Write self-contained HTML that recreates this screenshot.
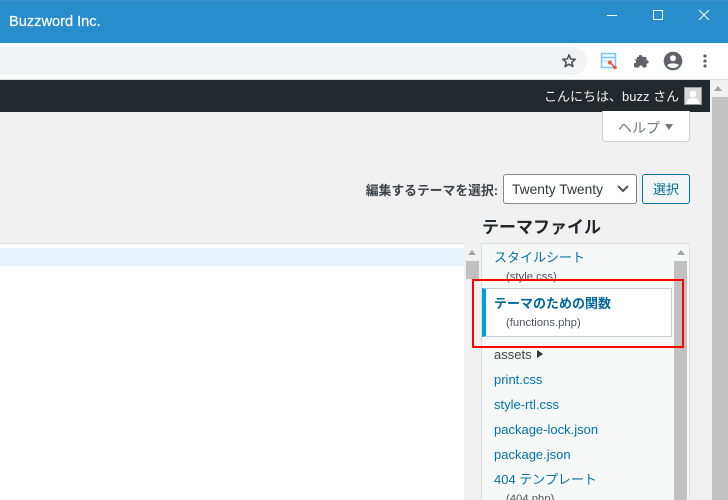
<!DOCTYPE html>
<html lang="ja">
<head>
<meta charset="utf-8">
<style>
html,body{margin:0;padding:0;width:728px;height:500px;overflow:hidden;background:#f1f1f1;}
body{position:relative;font-family:"Liberation Sans","Noto Sans CJK JP",sans-serif;}
.a{position:absolute;}
.t{position:absolute;white-space:nowrap;line-height:18px;}
.l{color:#0073aa;font-size:13px;left:494px;}
.s{color:#50575e;font-size:11.3px;left:506px;}
</style>
</head>
<body>
<!-- title bar -->
<div class="a" style="left:0;top:0;width:728px;height:43px;background:#288dcd;border-top:1px solid #3d93c9;box-sizing:border-box;"></div>
<div class="t" style="left:9px;top:13px;color:#fff;font-size:14.6px;-webkit-text-stroke:.2px #fff;">Buzzword Inc.</div>
<svg class="a" style="left:600px;top:0" width="128" height="30" viewBox="600 0 128 30" fill="none" stroke="#fff" stroke-width="1">
<path d="M607 15.5H617"/>
<rect x="653.5" y="10.5" width="9" height="9"/>
<path d="M699 10L709 20M709 10L699 20"/>
</svg>
<!-- toolbar -->
<div class="a" style="left:0;top:43px;width:728px;height:37px;background:#fff;border-bottom:1px solid #dcdcdc;box-sizing:border-box;"></div>
<div class="a" style="left:-20px;top:47px;width:607px;height:28px;background:#f1f3f4;border-radius:14px;"></div>
<svg class="a" style="left:560px;top:52px" width="18" height="18" viewBox="0 0 18 18" fill="none" stroke="#4d5155" stroke-width="1.6" stroke-linejoin="round">
<path d="M9 2.8L10.7 7L15.2 7.3L11.8 10.2L12.9 14.6L9 12.2L5.1 14.6L6.2 10.2L2.8 7.3L7.3 7Z"/>
</svg>
<svg class="a" style="left:600px;top:52px" width="18" height="18" viewBox="0 0 18 18">
<rect x="1.5" y="1.5" width="14" height="14" fill="#f0f9fe" stroke="#7cc8f5" stroke-width="1.5"/>
<path d="M2 5.5H15" stroke="#7cc8f5" stroke-width="1.5"/>
<path d="M2 9H10" stroke="#a9dcf8" stroke-width="1"/>
<path d="M10 10.5L15 15.5" stroke="#f0593e" stroke-width="1.6"/>
<circle cx="10" cy="10.5" r="2" fill="#f0593e"/>
<circle cx="15" cy="15.5" r="1.8" fill="#f0593e"/>
</svg>
<svg class="a" style="left:632px;top:52px" width="18" height="18" viewBox="0 0 18 18" fill="#5f6368">
<path d="M2 7.5H4.8C4.4 6.6 4.5 5 6 4.9H6.7V4.5C6.7 2.4 10.2 2.4 10.2 4.5V4.9H13.3C14 4.9 14.5 5.4 14.5 6V8.2H15C17.2 8.2 17.2 11.6 15 11.6H14.5V14.3C14.5 15 14 15.5 13.3 15.5H10.6V15C10.6 12.8 7.2 12.8 7.2 15V15.5H3.2C2.5 15.5 2 15 2 14.3V11.2H2.6C4.6 11.2 4.6 8 2.6 8H2Z"/>
</svg>
<svg class="a" style="left:663px;top:51px" width="20" height="20" viewBox="0 0 20 20">
<circle cx="10" cy="10" r="9.3" fill="#5f6368"/>
<circle cx="10" cy="7.3" r="3" fill="#fff"/>
<path d="M4.2 14.2C5.5 11.8 14.5 11.8 15.8 14.2C14.4 16 12.4 17 10 17C7.6 17 5.6 16 4.2 14.2Z" fill="#fff"/>
</svg>
<svg class="a" style="left:700px;top:52px" width="10" height="18" viewBox="0 0 10 18" fill="#5f6368">
<circle cx="5" cy="4" r="1.6"/><circle cx="5" cy="9" r="1.6"/><circle cx="5" cy="14" r="1.6"/>
</svg>
<!-- page scrollbar -->
<div class="a" style="left:712px;top:97px;width:16px;height:403px;background:#c1c1c1;"></div>
<div class="a" style="left:714px;top:86px;width:0;height:0;border-left:4px solid transparent;border-right:4px solid transparent;border-bottom:5px solid #a3a3a3;"></div>
<!-- admin bar -->
<div class="a" style="left:0;top:80px;width:710px;height:32px;background:#23282d;"></div>
<div class="t" style="left:544px;top:88px;color:#eee;font-size:13px;">こんにちは、buzz さん</div>
<svg class="a" style="left:684px;top:87px" width="18" height="18" viewBox="0 0 18 18">
<rect x=".5" y=".5" width="17" height="17" fill="#d8d8d8" stroke="#999"/>
<circle cx="9" cy="7" r="3.4" fill="#fff"/>
<path d="M2.5 17C3 12 6 11 9 11C12 11 15 12 15.5 17Z" fill="#fff"/>
</svg>
<!-- help -->
<div class="a" style="left:602px;top:111px;width:88px;height:31px;background:#fff;border:1px solid #ccd0d4;border-top:0;border-radius:0 0 4px 4px;box-sizing:border-box;"></div>
<div class="t" style="left:618px;top:119px;color:#72777c;font-size:14px;">ヘルプ</div>
<div class="a" style="left:665px;top:124px;width:0;height:0;border-left:4px solid transparent;border-right:4px solid transparent;border-top:6px solid #72777c;"></div>
<!-- theme select -->
<div class="t" style="left:360px;top:182px;color:#3c434a;font-size:12.8px;font-weight:bold;width:138px;text-align:right;">編集するテーマを選択:</div>
<div class="a" style="left:503px;top:174px;width:134px;height:30px;background:#fff;border:1px solid #7e8993;border-radius:3px;box-sizing:border-box;"></div>
<div class="t" style="left:512px;top:181px;color:#32373c;font-size:13.8px;">Twenty Twenty</div>
<svg class="a" style="left:617px;top:184px" width="12" height="10" viewBox="0 0 12 10" fill="none" stroke="#50575e" stroke-width="2"><path d="M1 2L6 7L11 2"/></svg>
<div class="a" style="left:642px;top:174px;width:48px;height:30px;background:#f3f5f6;border:1px solid #0071a1;border-radius:3px;box-sizing:border-box;"></div>
<div class="t" style="left:653px;top:181px;color:#0071a1;font-size:13px;">選択</div>
<div class="t" style="left:482px;top:219px;color:#23282d;font-size:17px;font-weight:bold;">テーマファイル</div>
<!-- editor -->
<div class="a" style="left:0;top:243px;width:465px;height:257px;background:#fff;border-top:1px solid #ddd;box-sizing:border-box;"></div>
<div class="a" style="left:0;top:248px;width:464px;height:18px;background:#e8f2fc;"></div>
<div class="a" style="left:464px;top:243px;width:18px;height:257px;background:#f1f1f1;"></div>
<div class="a" style="left:466px;top:261px;width:13px;height:18px;background:#c1c1c1;"></div>
<div class="a" style="left:468px;top:250px;width:0;height:0;border-left:4px solid transparent;border-right:4px solid transparent;border-bottom:5px solid #a3a3a3;"></div>
<!-- file list -->
<div class="a" style="left:481px;top:243px;width:209px;height:257px;background:#f6f7f7;border:1px solid #ddd;border-bottom:0;box-sizing:border-box;"></div>
<div class="a" style="left:674px;top:261px;width:13px;height:239px;background:#c1c1c1;"></div>
<div class="a" style="left:677px;top:250px;width:0;height:0;border-left:4px solid transparent;border-right:4px solid transparent;border-bottom:5px solid #a3a3a3;"></div>
<div class="t l" style="top:249px;">スタイルシート</div>
<div class="t s" style="top:268px;">(style.css)</div>
<div class="a" style="left:482px;top:288px;width:190px;height:49px;background:#fff;border:1px solid #c8ccd6;border-left:4px solid #00a0d2;box-sizing:border-box;"></div>
<div class="t l" style="top:295px;font-weight:bold;color:#00669b;">テーマのための関数</div>
<div class="t s" style="top:314px;">(functions.php)</div>
<div class="t" style="left:494px;top:346px;font-size:13px;color:#444;">assets</div>
<div class="a" style="left:537px;top:350px;width:0;height:0;border-top:4px solid transparent;border-bottom:4px solid transparent;border-left:6px solid #32373c;"></div>
<div class="t l" style="top:371px;">print.css</div>
<div class="t l" style="top:396px;">style-rtl.css</div>
<div class="t l" style="top:421px;">package-lock.json</div>
<div class="t l" style="top:446px;">package.json</div>
<div class="t l" style="top:471px;">404 テンプレート</div>
<div class="t s" style="top:490px;">(404.php)</div>
<!-- red box -->
<div class="a" style="left:472px;top:279px;width:212px;height:69px;border:2px solid #f00;box-sizing:border-box;"></div>
</body>
</html>
